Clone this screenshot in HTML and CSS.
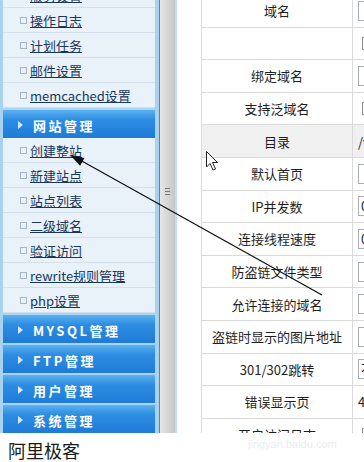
FILE: index.html
```html
<!DOCTYPE html>
<html lang="zh-CN">
<head>
  <meta charset="UTF-8" />
  <title>网站管理 - 创建整站</title>
  <link rel="stylesheet" href="styles.css">
</head>
<body>
  <div class="frame">
    <!-- 左侧菜单 -->
    <aside class="sidebar">
      <ul class="menu">
        <li class="cut"><a href="#">服务设置</a></li>
        <li><a href="#">操作日志</a></li>
        <li><a href="#">计划任务</a></li>
        <li><a href="#">邮件设置</a></li>
        <li><a href="#">memcached设置</a></li>
      </ul>
      <div class="group-head">网站管理</div>
      <ul class="menu">
        <li><a href="#">创建整站</a></li>
        <li><a href="#">新建站点</a></li>
        <li><a href="#">站点列表</a></li>
        <li><a href="#">二级域名</a></li>
        <li><a href="#">验证访问</a></li>
        <li><a href="#">rewrite规则管理</a></li>
        <li><a href="#">php设置</a></li>
      </ul>
      <div class="group-head">MYSQL管理</div>
      <div class="group-head">FTP管理</div>
      <div class="group-head">用户管理</div>
      <div class="group-head">系统管理</div>
    </aside>

    <div class="splitter">
      <span class="grip"></span>
    </div>

    <!-- 右侧表单 -->
    <main class="content">
      <div class="form">
        <div class="row"><div class="label">域名</div><div class="value"><span class="field"></span></div></div>
        <div class="row"><div class="label"></div><div class="value"><span class="check"></span></div></div>
        <div class="row"><div class="label">绑定域名</div><div class="value"><span class="field"></span></div></div>
        <div class="row"><div class="label">支持泛域名</div><div class="value"><span class="check"></span></div></div>
        <div class="row shaded"><div class="label">目录</div><div class="value">/www/</div></div>
        <div class="row"><div class="label">默认首页</div><div class="value"><span class="field"></span></div></div>
        <div class="row"><div class="label">IP并发数</div><div class="value"><span class="field">0</span></div></div>
        <div class="row"><div class="label">连接线程速度</div><div class="value"><span class="field">0</span></div></div>
        <div class="row"><div class="label">防盗链文件类型</div><div class="value"><span class="field"></span></div></div>
        <div class="row"><div class="label">允许连接的域名</div><div class="value"><span class="field"></span></div></div>
        <div class="row"><div class="label">盗链时显示的图片地址</div><div class="value"><span class="field"></span></div></div>
        <div class="row"><div class="label">301/302跳转</div><div class="value"><span class="field">不跳转</span></div></div>
        <div class="row"><div class="label">错误显示页</div><div class="value">404</div></div>
        <div class="row"><div class="label">开启访问日志</div><div class="value"><span class="check"></span></div></div>
      </div>
    </main>
  </div>

  <p class="caption">阿里极客</p>

  <span class="watermark">jingyan.baidu.com</span>

  <!-- 标注箭头和鼠标指针 -->
  <svg class="annotation" width="364" height="462" viewBox="0 0 364 462">
    <line x1="322" y1="295" x2="80" y2="160" stroke="#111" stroke-width="1.3" />
    <polygon points="70,155 80.1,165.7 84.5,157.9" fill="#111" />
    <path d="M206.5 151.5 L206.5 167 L210 163.5 L213 170 L215.5 169 L212.5 162.5 L217.5 162.5 Z"
          fill="#fff" stroke="#222" stroke-width="1" stroke-linejoin="round" />
  </svg>
</body>
</html>
```

FILE: styles.css
```css
* {
  box-sizing: border-box;
}

html,
body {
  margin: 0;
}

body {
  width: 364px;
  height: 462px;
  overflow: hidden;
  position: relative;
  background: #fff;
  font-family: "Noto Sans CJK SC", "Noto Sans", sans-serif;
  color: #222;
}

.frame {
  display: flex;
  height: 433px;
  overflow: hidden;
}

/* 左侧菜单 */
.sidebar {
  width: 159px;
  flex: none;
  background: #e9f1f9;
  border-left: 3px solid #a9d1f0;
  border-right: 4px solid #a9d1f0;
}

.menu {
  list-style: none;
  margin: 0;
  padding: 0;
}

.menu li {
  height: 25px;
  display: flex;
  align-items: center;
  padding-left: 17px;
  border-bottom: 1px solid #d3e0ec;
  font-size: 13px;
}

.menu li::before {
  content: "";
  flex: none;
  width: 5px;
  height: 5px;
  margin-right: 3px;
  border: 1px solid #a3b5c6;
}

.menu li.cut {
  margin-top: -17px;
}

.menu a {
  color: #17375d;
  text-decoration: underline;
}

.group-head {
  height: 30px;
  display: flex;
  align-items: center;
  padding: 2px 0 0 15px;
  border-top: 2px solid #a6d5f6;
  background: linear-gradient(#5cb1f0, #2d8de2 35%, #1f7bd6);
  color: #fff;
  font-size: 13px;
  font-weight: bold;
  letter-spacing: 2.5px;
}

.group-head::before {
  content: "";
  margin-right: 10px;
  border-left: 5px solid #cfe8fc;
  border-top: 4px solid transparent;
  border-bottom: 4px solid transparent;
}

/* 分隔条 */
.splitter {
  width: 18px;
  flex: none;
  border-left: 1px solid #7c7c7c;
  border-right: 2px solid #bcdff7;
  background: linear-gradient(to right, #e6e6e6, #c6c6c6);
  padding: 188px 0 0 5px;
}

.grip {
  display: block;
  width: 5px;
  height: 7px;
  border-top: 1px solid #777;
  border-bottom: 1px solid #777;
  background: linear-gradient(transparent 2px, #777 2px, #777 3px, transparent 3px);
}

/* 右侧表单 */
.content {
  flex: 1;
  overflow: hidden;
  padding-left: 24px;
}

.form {
  width: 320px;
  margin-top: -5px;
  border-left: 1px solid #dadada;
}

.row {
  display: flex;
  height: 32.6px;
  border-bottom: 1px solid #dadada;
}

.row.shaded {
  background: #f0f0f0;
}

.label {
  width: 151px;
  flex: none;
  display: flex;
  align-items: center;
  justify-content: center;
  border-right: 1px solid #dadada;
  font-size: 13px;
  color: #1e1e1e;
}

.value {
  flex: 1;
  display: flex;
  align-items: center;
  padding-left: 5px;
  font-size: 13px;
  white-space: nowrap;
}

.field {
  display: block;
  width: 140px;
  height: 20px;
  padding-left: 2px;
  border: 1px solid #a9afb6;
  background: #fff;
  line-height: 18px;
  font-size: 13px;
}

.check {
  display: block;
  width: 13px;
  height: 13px;
  margin-left: 4px;
  border: 1px solid #8c8c8c;
  background: #e4e4e4;
  box-shadow: inset 0 0 0 1px #fff;
}

.caption {
  margin: 0;
  padding: 7px 0 0 8px;
  font-size: 18px;
  line-height: 20px;
  color: #1a1a1a;
}

.watermark {
  position: absolute;
  left: 248px;
  top: 438px;
  font-family: "Liberation Sans", sans-serif;
  font-size: 11px;
  color: #ececec;
}

.annotation {
  position: absolute;
  top: 0;
  left: 0;
  pointer-events: none;
}
```
